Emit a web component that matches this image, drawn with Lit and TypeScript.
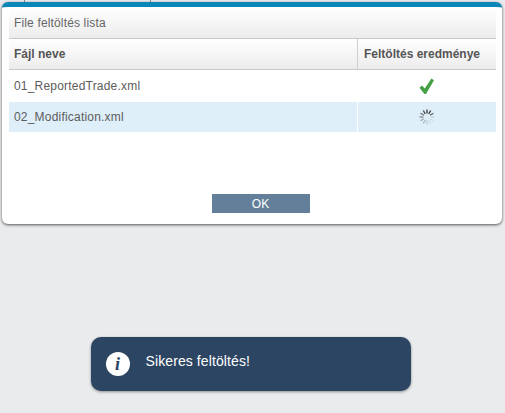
import { LitElement, css, html, svg } from "lit";
import { customElement, property } from "lit/decorators.js";

interface UploadRow {
  name: string;
  status: "done" | "loading";
}

// spinner frame: opacity per spoke, clockwise from 12 o'clock
const SPOKES = [1, 1, 0.8, 0.15, 0.1, 0.1, 0.2, 0.3, 0.4, 0.55, 0.75, 0.95];

@customElement("app-root")
export class AppRoot extends LitElement {
  @property({ type: Array })
  rows: UploadRow[] = [
    { name: "01_ReportedTrade.xml", status: "done" },
    { name: "02_Modification.xml", status: "loading" },
  ];

  static styles = css`
    :host {
      display: block;
      width: 505px;
      height: 413px;
      overflow: hidden;
      background: #e9ebed;
      font-family: "Liberation Sans", Arial, sans-serif;
    }
    .backdrop {
      height: 413px;
      display: flex;
      flex-direction: column;
      align-items: center;
    }
    /* bits of the page header peeking out above the dialog */
    .strip {
      align-self: stretch;
      height: 2px;
      flex: none;
      display: flex;
      padding-left: 24px;
      gap: 125px;
    }
    .strip i {
      width: 1px;
      background: #8a8f94;
    }
    .modal {
      box-sizing: border-box;
      width: 500px;
      height: 222px;
      flex: none;
      align-self: flex-start;
      margin-left: 2px;
      display: flex;
      flex-direction: column;
      background: #fff;
      border-top: 5px solid #0a86b9;
      border-radius: 6px;
      box-shadow: 0 1px 3px rgba(0, 0, 0, 0.65);
      padding: 0 6px 0 7px;
    }
    .title {
      height: 32px;
      flex: none;
      display: flex;
      align-items: center;
      padding-left: 5px;
      font-size: 12px;
      letter-spacing: 0.15px;
      color: #666;
      background: linear-gradient(#fff, #ececec);
      border-bottom: 1px solid #c9c9c9;
      box-sizing: border-box;
    }
    .row {
      display: grid;
      grid-template-columns: 348px 1fr;
      flex: none;
    }
    .head {
      height: 31px;
      box-sizing: border-box;
      background: linear-gradient(#fff, #ececec);
      border-bottom: 1px solid #c9c9c9;
      font-size: 12px;
      font-weight: bold;
      color: #555;
    }
    .cell {
      display: flex;
      align-items: center;
      padding-left: 5px;
    }
    .head .result {
      border-left: 1px solid #cfcfcf;
      padding-left: 6px;
    }
    .body {
      height: 32px;
      font-size: 12px;
      letter-spacing: 0.2px;
      color: #5c5c5c;
    }
    .body.alt {
      height: 30px;
      background: #dfeffa;
    }
    .body .result {
      justify-content: center;
      padding: 0 0 0 1px;
    }
    .body.alt .result {
      border-left: 1px solid #fff;
      padding-left: 0;
    }
    .footer {
      flex: 1;
      display: flex;
      justify-content: center;
      align-items: flex-start;
      padding-top: 62px;
      padding-left: 16px;
    }
    .ok {
      width: 98px;
      height: 19px;
      border: 0;
      padding: 0;
      background: #647f99;
      color: #fff;
      font: 12px "Liberation Sans", Arial, sans-serif;
    }
    .toast {
      box-sizing: border-box;
      width: 320px;
      height: 54px;
      margin-top: 113px;
      margin-right: 4px;
      flex: none;
      display: flex;
      align-items: center;
      gap: 16px;
      padding-left: 15px;
      border-radius: 10px;
      background: #2c4563;
      color: #fff;
      font-size: 14px;
      letter-spacing: 0.1px;
      box-shadow: 0 1px 3px rgba(0, 0, 0, 0.4);
    }
    .toast span {
      margin-top: -6px;
    }
    .info {
      width: 24px;
      height: 24px;
      flex: none;
      border-radius: 50%;
      background: #fff;
      color: #2c4563;
      display: flex;
      align-items: center;
      justify-content: center;
      font: italic bold 18px "Liberation Serif", serif;
    }
  `;

  private _renderStatus(status: UploadRow["status"]) {
    if (status === "done") {
      return html`<svg width="16" height="17" viewBox="0 0 16 17">
        <path d="M0.5 9.8 L3 7.6 L5.8 10.4 L12.4 0.6 L15 2.2 L7 16 L5.4 16 Z" fill="#46a046" />
      </svg>`;
    }
    return html`<svg width="16" height="16" viewBox="0 0 16 16">
      ${SPOKES.map(
        (o, i) => svg`<line
          x1="8"
          y1="0.5"
          x2="8"
          y2="4.5"
          stroke="#444"
          stroke-width="1.4"
          opacity="${o}"
          transform="rotate(${i * 30} 8 8)"
        />`
      )}
    </svg>`;
  }

  render() {
    return html`
      <div class="backdrop">
        <div class="strip"><i></i><i></i></div>
        <div class="modal">
          <div class="title">File feltöltés lista</div>
          <div class="row head">
            <div class="cell">Fájl neve</div>
            <div class="cell result">Feltöltés eredménye</div>
          </div>
          ${this.rows.map(
            (row, i) => html`
              <div class="row body ${i % 2 ? "alt" : ""}">
                <div class="cell">${row.name}</div>
                <div class="cell result">${this._renderStatus(row.status)}</div>
              </div>
            `
          )}
          <div class="footer"><button class="ok">OK</button></div>
        </div>
        <div class="toast">
          <div class="info">i</div>
          <span>Sikeres feltöltés!</span>
        </div>
      </div>
    `;
  }
}
